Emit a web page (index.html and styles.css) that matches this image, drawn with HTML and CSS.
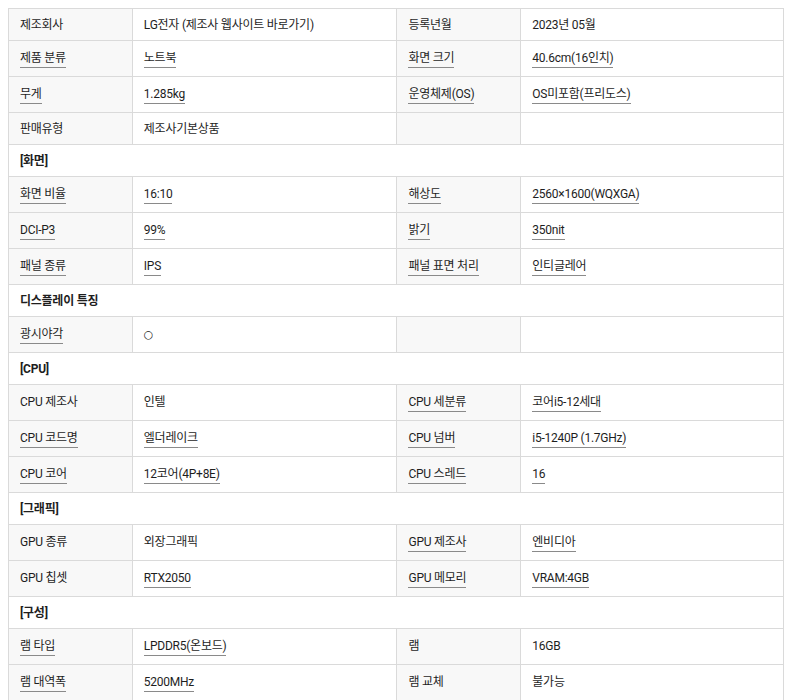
FILE: index.html
```html
<!DOCTYPE html>
<html lang="ko">
<head>
<meta charset="utf-8">
<title>제품 사양</title>
<link rel="stylesheet" href="styles.css">
</head>
<body>
<div class="spec">
  <div class="row">
    <div class="th">제조회사</div><div class="td">LG전자 (제조사 웹사이트 바로가기)</div>
    <div class="th">등록년월</div><div class="td">2023년 05월</div>
  </div>
  <div class="row u">
    <div class="th"><span class="ul">제품 분류</span></div><div class="td"><span class="ul">노트북</span></div>
    <div class="th"><span class="ul">화면 크기</span></div><div class="td"><span class="ul">40.6cm(16인치)</span></div>
  </div>
  <div class="row u">
    <div class="th"><span class="ul">무게</span></div><div class="td"><span class="ul">1.285kg</span></div>
    <div class="th"><span class="ul">운영체제(OS)</span></div><div class="td"><span class="ul">OS미포함(프리도스)</span></div>
  </div>
  <div class="row">
    <div class="th">판매유형</div><div class="td">제조사기본상품</div>
    <div class="th"></div><div class="td"></div>
  </div>
  <div class="row sec"><div class="sh">[화면]</div></div>
  <div class="row u">
    <div class="th"><span class="ul">화면 비율</span></div><div class="td"><span class="ul">16:10</span></div>
    <div class="th"><span class="ul">해상도</span></div><div class="td"><span class="ul">2560×1600(WQXGA)</span></div>
  </div>
  <div class="row u">
    <div class="th"><span class="ul">DCI-P3</span></div><div class="td"><span class="ul">99%</span></div>
    <div class="th"><span class="ul">밝기</span></div><div class="td"><span class="ul">350nit</span></div>
  </div>
  <div class="row u">
    <div class="th"><span class="ul">패널 종류</span></div><div class="td"><span class="ul">IPS</span></div>
    <div class="th"><span class="ul">패널 표면 처리</span></div><div class="td"><span class="ul">인티글레어</span></div>
  </div>
  <div class="row sec"><div class="sh">디스플레이 특징</div></div>
  <div class="row u">
    <div class="th"><span class="ul">광시야각</span></div><div class="td"><span class="circle">○</span></div>
    <div class="th"></div><div class="td"></div>
  </div>
  <div class="row sec"><div class="sh">[CPU]</div></div>
  <div class="row u">
    <div class="th">CPU 제조사</div><div class="td">인텔</div>
    <div class="th"><span class="ul">CPU 세분류</span></div><div class="td"><span class="ul">코어i5-12세대</span></div>
  </div>
  <div class="row u">
    <div class="th"><span class="ul">CPU 코드명</span></div><div class="td"><span class="ul">엘더레이크</span></div>
    <div class="th"><span class="ul">CPU 넘버</span></div><div class="td"><span class="ul">i5-1240P (1.7GHz)</span></div>
  </div>
  <div class="row u">
    <div class="th"><span class="ul">CPU 코어</span></div><div class="td"><span class="ul">12코어(4P+8E)</span></div>
    <div class="th"><span class="ul">CPU 스레드</span></div><div class="td"><span class="ul">16</span></div>
  </div>
  <div class="row sec"><div class="sh">[그래픽]</div></div>
  <div class="row u">
    <div class="th">GPU 종류</div><div class="td">외장그래픽</div>
    <div class="th"><span class="ul">GPU 제조사</span></div><div class="td"><span class="ul">엔비디아</span></div>
  </div>
  <div class="row u">
    <div class="th">GPU 칩셋</div><div class="td"><span class="ul">RTX2050</span></div>
    <div class="th"><span class="ul">GPU 메모리</span></div><div class="td"><span class="ul">VRAM:4GB</span></div>
  </div>
  <div class="row sec"><div class="sh">[구성]</div></div>
  <div class="row u">
    <div class="th"><span class="ul">램 타입</span></div><div class="td"><span class="ul">LPDDR5(온보드)</span></div>
    <div class="th">램</div><div class="td">16GB</div>
  </div>
  <div class="row u">
    <div class="th"><span class="ul">램 대역폭</span></div><div class="td"><span class="ul">5200MHz</span></div>
    <div class="th">램 교체</div><div class="td">불가능</div>
  </div>
</div>
</body>
</html>
```

FILE: styles.css
```css
html, body {
  margin: 0;
  padding: 0;
  background: #ffffff;
}
body {
  padding: 8px 16px 0 8px;
  font-family: "Roboto", "Noto Sans CJK KR", "Noto Sans", sans-serif;
  font-size: 12px;
  letter-spacing: -0.25px;
  color: #1e1e1e;
}
.spec {
  display: grid;
  grid-template-columns: 123fr 264fr 123fr 262fr;
  gap: 1px;
  background: #dadada;
  border: 1px solid #dadada;
}
.row {
  display: contents;
}
.th, .td, .sh {
  padding: 7px 11px 5px;
  line-height: 19px;
  min-height: 19px;
  display: flex;
  align-items: center;
  white-space: nowrap;
}
.th {
  background: #f8f8f8;
}
.td {
  background: #ffffff;
}
.row.u .th, .row.u .td {
  min-height: 23px;
}
.row.u .th, .row.u .td {
  padding-top: 6px;
  padding-bottom: 6px;
}
.sh {
  grid-column: 1 / -1;
  background: #ffffff;
  font-weight: 700;
}
.ul {
  display: inline-block;
  line-height: 17px;
  border-bottom: 1px solid #8a8a8a;
}
.circle {
  font-family: "DejaVu Sans", sans-serif;
  font-size: 11px;
}
```
